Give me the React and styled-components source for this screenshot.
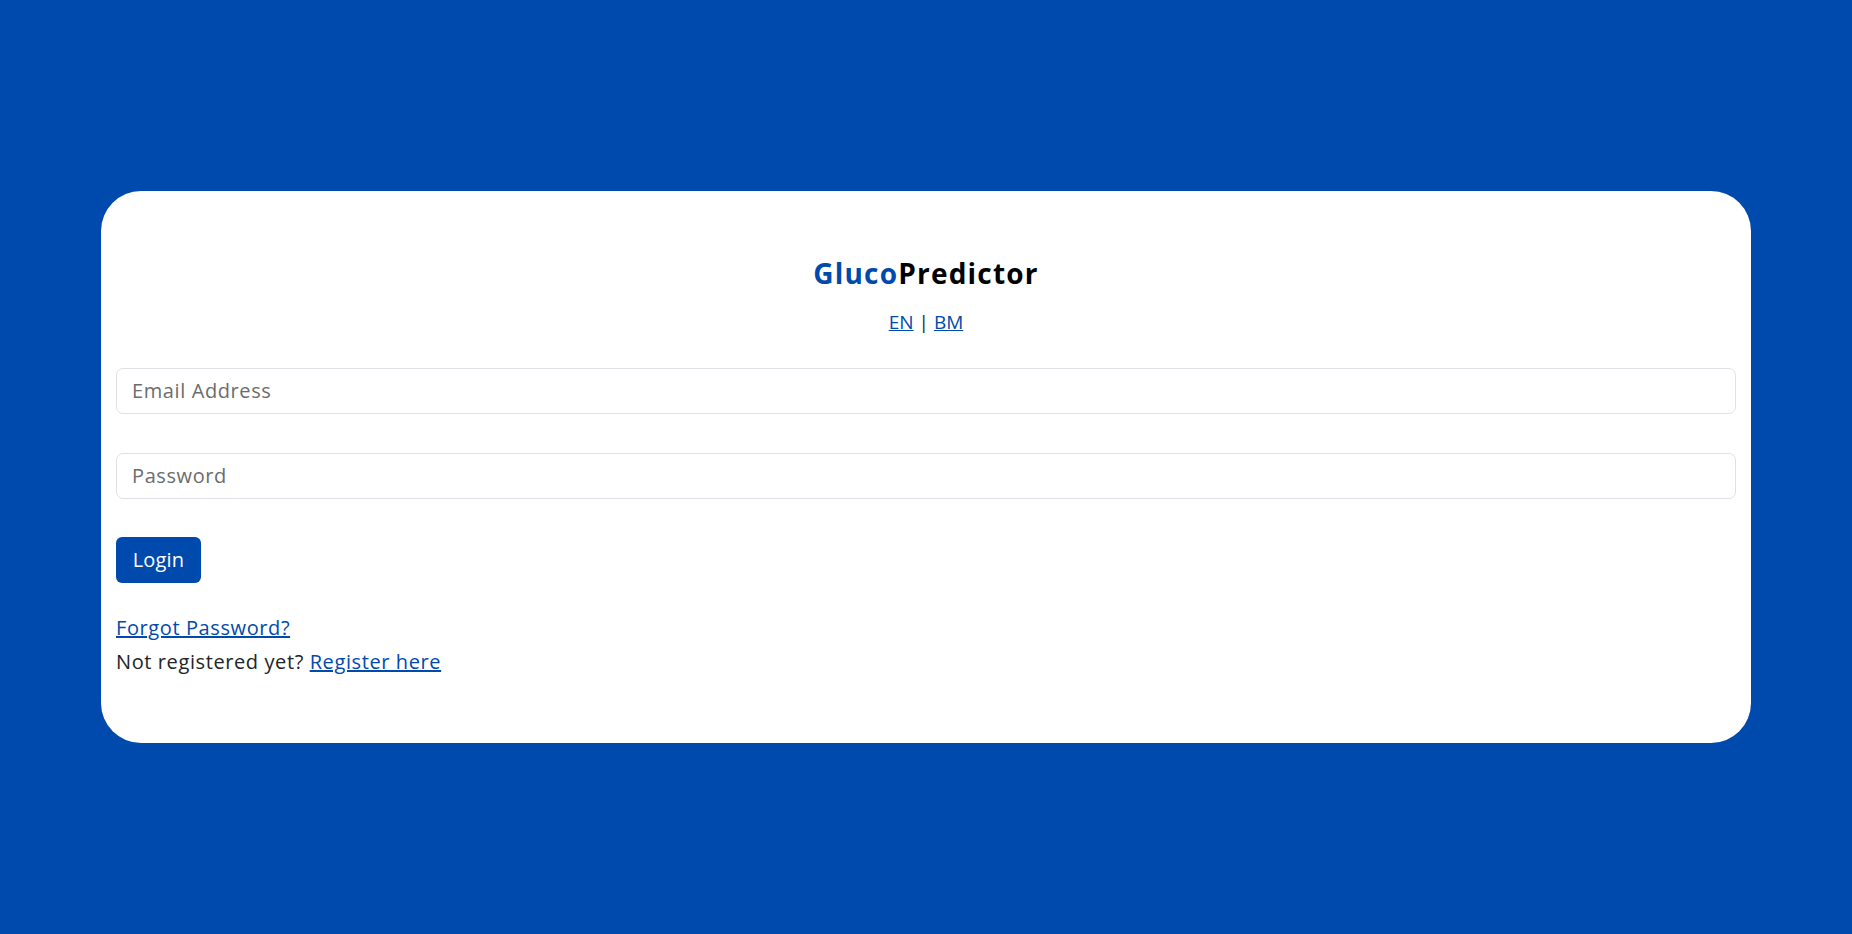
import React from 'react';
import styled, { createGlobalStyle } from 'styled-components';

const GlobalStyle = createGlobalStyle`
  html, body {
    margin: 0;
    padding: 0;
    height: 100%;
  }
  body {
    background-color: #004aad;
    font-family: "Open Sans", "Liberation Sans", sans-serif;
    color: #212529;
  }
  #root {
    min-height: 100vh;
  }
`;

const Page = styled.div`
  min-height: 100vh;
  display: flex;
  align-items: center;
  justify-content: center;
`;

const Card = styled.div`
  width: 1650px;
  box-sizing: border-box;
  background-color: #fff;
  border-radius: 40px;
  padding: 66px 15px 64px;
`;

const Brand = styled.h1`
  margin: 0;
  text-align: center;
  font-size: 28px;
  font-weight: 700;
  letter-spacing: 1.2px;
  color: #000;
  line-height: 1.2;
`;

const BrandAccent = styled.span`
  color: #004aad;
`;

const LangSwitch = styled.div`
  text-align: center;
  margin-top: 16px;
  font-size: 19px;
  line-height: 30px;
  color: #212529;
`;

const Link = styled.a`
  color: #004aad;
  text-decoration: underline;
  cursor: pointer;
`;

const Form = styled.form`
  margin-top: 31px;
  display: flex;
  flex-direction: column;
`;

const Input = styled.input`
  box-sizing: border-box;
  width: 100%;
  height: 46px;
  padding: 0 15px;
  border: 1px solid #dee2e6;
  border-radius: 7px;
  font-family: inherit;
  font-size: 20px;
  letter-spacing: 0.6px;
  color: #212529;
  margin-bottom: ${(p) => p.$gap || '38px'};

  &::placeholder {
    color: #6c6c6c;
  }
`;

const Button = styled.button`
  align-self: flex-start;
  height: 46px;
  width: 85px;
  border: none;
  border-radius: 6px;
  background-color: #004aad;
  color: #fff;
  font-family: inherit;
  font-size: 20px;
  letter-spacing: 0.2px;
  cursor: pointer;
`;

const Footer = styled.div`
  margin-top: 28px;
  font-size: 20px;
  letter-spacing: 0.6px;
  line-height: 34px;
`;

export default function App() {
  return (
    <>
      <GlobalStyle />
      <Page>
        <Card>
          <Brand>
            <BrandAccent>Gluco</BrandAccent>Predictor
          </Brand>
          <LangSwitch>
            <Link>EN</Link> | <Link>BM</Link>
          </LangSwitch>
          <Form onSubmit={(e) => e.preventDefault()}>
            <Input type="email" placeholder="Email Address" $gap="39px" />
            <Input type="password" placeholder="Password" $gap="38px" />
            <Button type="submit">Login</Button>
          </Form>
          <Footer>
            <div>
              <Link>Forgot Password?</Link>
            </div>
            <div>
              Not registered yet? <Link>Register here</Link>
            </div>
          </Footer>
        </Card>
      </Page>
    </>
  );
}
